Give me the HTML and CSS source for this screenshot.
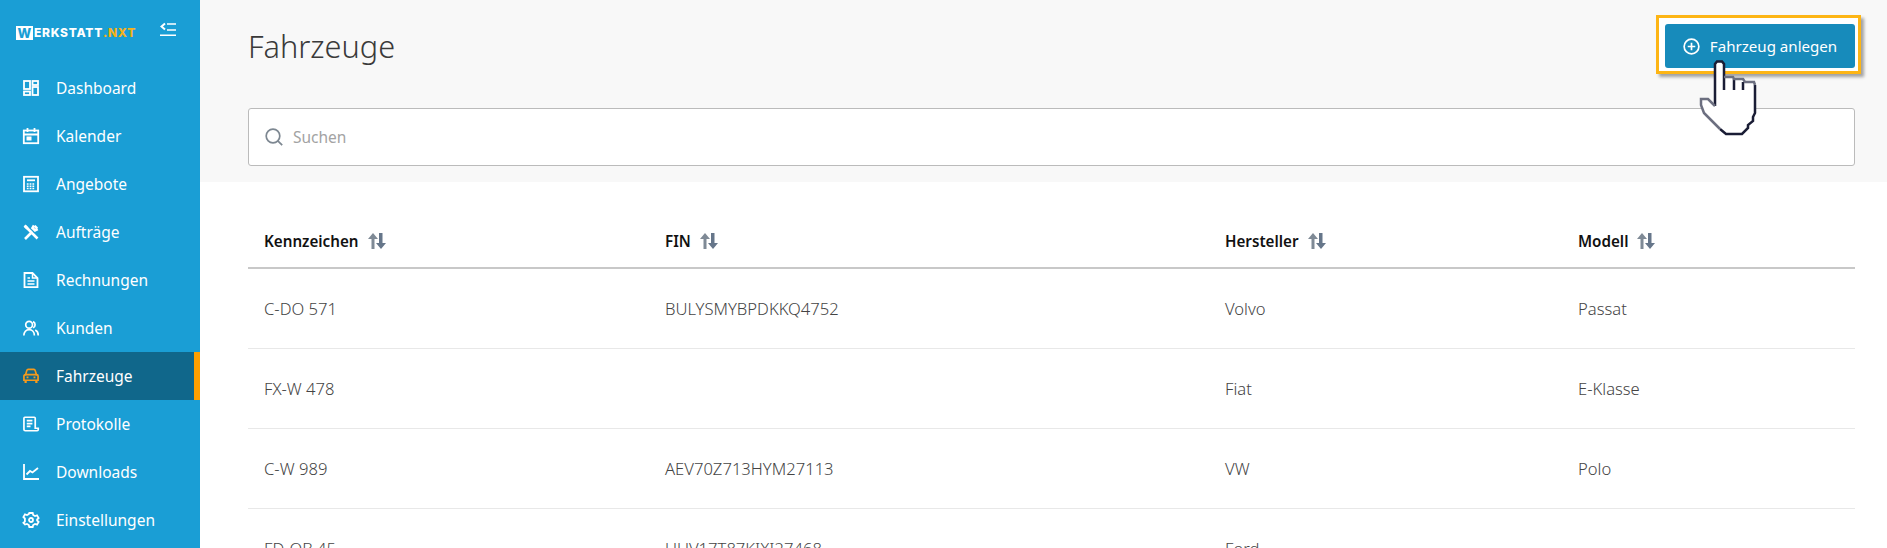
FILE: index.html
```html
<!DOCTYPE html>
<html lang="de">
<head>
<meta charset="utf-8">
<title>Fahrzeuge</title>
<link rel="stylesheet" href="styles.css">
</head>
<body>
<div class="app">
  <aside class="sidebar">
    <div class="brand">
      <div class="logo"><span class="logo-w">W</span><span class="logo-rest">ERKSTATT</span><span class="logo-nxt">.NXT</span></div>
      <svg class="collapse" viewBox="0 0 16 14" width="16" height="14" fill="none" stroke="#fff" stroke-width="1.600"><path d="M5 1.500 1.500 4.500 5 7.500" stroke-width="2"/><path d="M7 2h9M7 8h9M0 13.200h16"/></svg>
    </div>
    <nav class="nav">
      <a class="nav-item"><svg class="ico" viewBox="0 0 16 16"><rect x="1" y="1" width="6" height="8"/><rect x="9.500" y="1" width="5.500" height="4"/><rect x="1" y="11.500" width="6" height="3.500"/><rect x="9.500" y="7" width="5.500" height="8"/></svg><span>Dashboard</span></a>
      <a class="nav-item"><svg class="ico" viewBox="0 0 16 16"><rect x=".8" y="2.500" width="14.400" height="12.700"/><path d="M4.500 0v4M11.500 0v4M.8 6.500h14.400"/><path class="fill" d="M3.500 8.500h5v4h-5z"/></svg><span>Kalender</span></a>
      <a class="nav-item"><svg class="ico" viewBox="0 0 16 16"><rect x="1" y=".8" width="14" height="14.500"/><path d="M4 4.300h8"/><path d="M3.800 8h8.400M3.800 10.300h8.400M3.800 12.500h8.400" stroke-width="1.500" stroke-dasharray="1.800 1"/></svg><span>Angebote</span></a>
      <a class="nav-item"><svg class="ico ico-bold" viewBox="0 0 16 16"><path d="M2 15 9.500 7.500M11 1.500 9.500 4l2.500 2.500 2.700-1.500M1.500 1.500 14.500 14.500" /><path d="M10.500 2.500 12.500 1 15 3.500 13.500 5.500z" class="fill"/><path d="M1 3 3 1l2.500 2.500-2 2z" class="fill"/></svg><span>Aufträge</span></a>
      <a class="nav-item"><svg class="ico" viewBox="0 0 16 16"><path d="M1.500 1h8l5 5v9.200h-13z"/><path d="M9.500 1v5h5M4.500 6h2.500M4.500 9h7M4.500 12h7" stroke-width="1.500"/></svg><span>Rechnungen</span></a>
      <a class="nav-item"><svg class="ico" viewBox="0 0 17 16"><circle cx="6.500" cy="4.500" r="3.600"/><path d="M.9 16c0-3.800 2.400-6.300 5.600-6.300s5.600 2.500 5.600 6.300M10.700 1.200a3.600 3.600 0 0 1 0 6.600M13 10.200c2 .9 3.200 3 3.200 5.800"/></svg><span>Kunden</span></a>
      <a class="nav-item active"><svg class="ico ico-car" viewBox="0 0 17 16"><path d="M2.500 7.500 4 2.300C4.200 1.600 4.700 1 5.500 1h6c.8 0 1.300.6 1.500 1.300l1.500 5.200"/><path d="M2.500 6.500h12c.9 0 1.500.7 1.500 1.500v4.500H1V8c0-.8.600-1.500 1.500-1.500z"/><path d="M2.800 12.500v3M14.200 12.500v3" stroke-width="2.400"/><path d="M3.800 9.500h2M11.200 9.500h2"/></svg><span>Fahrzeuge</span></a>
      <a class="nav-item"><svg class="ico" viewBox="0 0 17 16"><path d="M13 12.500V1.800c0-.6-.4-1-1-1H2c-.6 0-1 .4-1 1v12c0 .8.600 1.400 1.400 1.400h12.600c.8 0 1.200-.6 1.200-1.400v-1.300z"/><path d="M4 4.500h6M4 7.500h6M4 10.500h4"/></svg><span>Protokolle</span></a>
      <a class="nav-item"><svg class="ico" viewBox="0 0 16 16"><path d="M1 0v15h15"/><path d="M3.500 10.500 7 7l2.500 1.500 5.500-4.500"/></svg><span>Downloads</span></a>
      <a class="nav-item"><svg class="ico" viewBox="0 0 16 16"><path d="M6.300 1h3.400l.5 2 1.800 1 2-.6 1.600 2.700-1.500 1.400v1l1.500 1.400-1.600 2.700-2-.6-1.800 1-.5 2H6.300l-.5-2-1.800-1-2 .6L.4 10.900 1.900 9.500v-3L.4 5.100 2 2.400l2 .6 1.800-1z"/><circle cx="8" cy="8" r="2"/></svg><span>Einstellungen</span></a>
    </nav>
  </aside>
  <main class="main">
    <header class="top">
      <div class="title-row">
        <h1 class="title">Fahrzeuge</h1>
        <div class="highlight">
          <button class="add-btn"><svg viewBox="0 0 18 18" width="17" height="17" fill="none" stroke="#fff" stroke-width="1.800"><circle cx="9" cy="9" r="7.800"/><path d="M9 5v8M5 9h8"/></svg>Fahrzeug anlegen</button>
        </div>
      </div>
      <label class="search">
        <svg viewBox="0 0 18 18" width="18" height="18" fill="none" stroke="#7d8791" stroke-width="1.700"><circle cx="8" cy="8" r="6.800"/><path d="m12.800 12.800 4.400 4.400"/></svg>
        <span class="placeholder">Suchen</span>
      </label>
    </header>
    <section class="content">
      <div class="grid head">
        <div class="th">Kennzeichen<svg class="sort" viewBox="0 0 18 16" width="18" height="16"><path class="sort-up" d="M3.500 16V6H0L5 0l5 6H6.500v10z"/><path class="sort-down" d="M11 0v10H8l5 6 5-6h-3.500V0z"/></svg></div>
        <div class="th">FIN<svg class="sort" viewBox="0 0 18 16" width="18" height="16"><path class="sort-up" d="M3.500 16V6H0L5 0l5 6H6.500v10z"/><path class="sort-down" d="M11 0v10H8l5 6 5-6h-3.500V0z"/></svg></div>
        <div class="th">Hersteller<svg class="sort" viewBox="0 0 18 16" width="18" height="16"><path class="sort-up" d="M3.500 16V6H0L5 0l5 6H6.500v10z"/><path class="sort-down" d="M11 0v10H8l5 6 5-6h-3.500V0z"/></svg></div>
        <div class="th">Modell<svg class="sort" viewBox="0 0 18 16" width="18" height="16"><path class="sort-up" d="M3.500 16V6H0L5 0l5 6H6.500v10z"/><path class="sort-down" d="M11 0v10H8l5 6 5-6h-3.500V0z"/></svg></div>
      </div>
      <div class="grid row"><div>C-DO 571</div><div>BULYSMYBPDKKQ4752</div><div>Volvo</div><div>Passat</div></div>
      <div class="grid row"><div>FX-W 478</div><div></div><div>Fiat</div><div>E-Klasse</div></div>
      <div class="grid row"><div>C-W 989</div><div>AEV70Z713HYM27113</div><div>VW</div><div>Polo</div></div>
      <div class="grid row"><div>FD-OB 45</div><div>UUV17T87KIXI27468</div><div>Ford</div><div></div></div>
    </section>
    <svg class="cursor" viewBox="0 0 70 85" width="70" height="85" fill="none" stroke-width="2.500" stroke-linejoin="miter">
      <path class="cursor-fill" d="M25 9 27 6.500h5L34 9v13h9l1 2h9l2 3h9l1 3v28l-2 4v4l-5 4v3l-6 6H36l-6-5-8-8-8-8-3-8v-6h7l7 7z"/>
      <path class="cursor-dark" d="M25 51V9l2-2.500h5L34 9v26M65 30v28l-2 4v4l-5 4v3l-6 6H36l-6-5M44 24v11M53 27v8"/>
      <path class="cursor-grey" d="M34 22h9l1 2h9l2 3h9l1 3M30 74l-8-8-8-8-3-8v-6h7l7 7"/>
    </svg>
  </main>
</div>
</body>
</html>
```
FILE: styles.css
```css
* { box-sizing: border-box; }
html, body { margin: 0; height: 100%; overflow: hidden; background: #fff; }
body { font-family: "Noto Sans", "Liberation Sans", sans-serif; color: #555; }
.app { display: flex; height: 548px; overflow: hidden; }

.sidebar { width: 200px; flex: none; background: #1a9ed5; color: #fff; }
.brand { height: 64px; padding: 22px 24px 0 16px; display: flex; justify-content: space-between; align-items: flex-start; }
.logo { display: flex; align-items: center; height: 17px; margin-top: 2px; font-family: "Inter", sans-serif; font-weight: 800; font-size: 12px; letter-spacing: .7px; }
.logo-w { background: #fff; color: #1a9ed5; width: 17px; height: 14px; line-height: 14px; text-align: center; letter-spacing: 0; font-size: 13px; }
.logo-rest { margin-left: 1px; }
.logo-nxt { color: #f6b21b; }
.collapse { display: block; }

.nav { display: flex; flex-direction: column; }
.nav-item { height: 48px; display: flex; align-items: center; gap: 17px; padding-left: 23px; font-size: 15.500px; color: #fff; }
.nav-item.active { background: #10678b; border-right: 6px solid #ff9f00; }
.ico { width: 16px; height: 16px; flex: none; fill: none; stroke: #fff; stroke-width: 1.800; overflow: visible; }
.ico .fill { fill: #fff; stroke: none; }
.ico-bold { stroke-width: 2.600; }
.ico-car { stroke: #f59a1c; }

.main { flex: 1; min-width: 0; position: relative; }
.top { background: #f8f8f8; height: 182px; padding: 24px 32px 0 48px; }
.title-row { display: flex; justify-content: space-between; align-items: flex-start; }
.title { margin: 0; font-size: 30.700px; line-height: 44px; font-weight: 300; color: #3a3a3a; }
.highlight { margin: -9px -6px -6px -9px; padding: 6px 3px 3px 6px; border: 3px solid #fdb515; background: #fff; box-shadow: 3px 3px 3px rgba(0,0,0,.35); }
.add-btn { display: flex; align-items: center; justify-content: center; gap: 10px; width: 190px; height: 44px; padding: 0; border: 0; border-radius: 3px; background: #178bbb; color: #fff; font-family: inherit; font-size: 15.100px; }
.search { display: flex; align-items: center; gap: 10px; height: 58px; margin-top: 40px; background: #fff; border: 1px solid #bbb; border-radius: 3px; padding: 0 16px; }
.placeholder { color: #a3a3a3; font-size: 15.500px; }

.content { padding: 32px 32px 0 48px; }
.grid { display: grid; grid-template-columns: 401px 560px 353px 1fr; padding: 0 16px; align-items: center; }
.head { height: 55px; border-bottom: 2px solid #c8c8c8; color: #111; font-weight: 600; font-size: 15.200px; }
.th { display: flex; align-items: center; gap: 9px; }
.sort { display: block; }
.sort-up { fill: #7f8a96; }
.sort-down { fill: #66768a; }
.row { height: 80px; border-bottom: 1px solid #e8e8e8; font-size: 16.600px; font-weight: 300; color: #444; }

.cursor { position: absolute; left: 1490px; top: 55px; }
.cursor-fill { fill: #fff; }
.cursor-dark { stroke: #1a1d35; }
.cursor-grey { stroke: #6c6f80; }
```
